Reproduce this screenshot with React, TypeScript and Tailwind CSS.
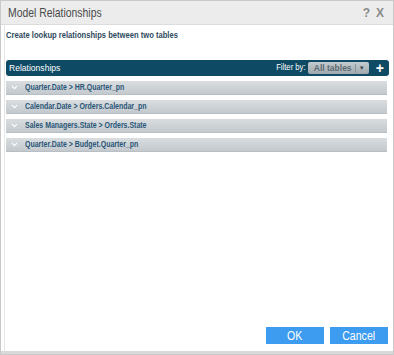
import { ChevronDown } from 'lucide-react'

const relationships = [
    'Quarter.Date > HR.Quarter_pn',
    'Calendar.Date > Orders.Calendar_pn',
    'Sales Managers.State > Orders.State',
    'Quarter.Date > Budget.Quarter_pn',
]

export default function App() {
    return (
        <div
            className="w-[394px] h-[355px] bg-white border border-[#c9c9c9] flex flex-col overflow-hidden"
            style={{ fontFamily: '"Liberation Sans", Arial, sans-serif' }}
        >
            {/* Title bar */}
            <div className="h-[24px] shrink-0 bg-[#ececec] border-b border-[#dcdcdc] flex items-center justify-between pl-[7px] pr-[9px]">
                <span className="inline-block origin-left scale-x-[0.8] text-[13px] text-[#4a4a4a] whitespace-nowrap">Model Relationships</span>
                <div className="flex items-center gap-[6px] text-[12px] font-bold text-[#8a8a8a]">
                    <span>?</span>
                    <span>X</span>
                </div>
            </div>

            {/* Body */}
            <div className="flex-1 flex flex-col pl-[1px] pr-[4px] border-l border-[#e6e6e6] ml-[3px]">
                <p className="mt-[3px] leading-[14px] text-[9.5px] font-bold text-[#2e4a5e] whitespace-nowrap">
                    <span className="inline-block origin-left scale-x-[0.8]">Create lookup relationships between two tables</span>
                </p>

                <div className="mt-[18px] h-[16px] bg-[#0e4a64] rounded-[3px] flex items-center justify-between pl-[3px] pr-[5px]">
                    <span className="inline-block origin-left scale-x-[0.9] text-[9.5px] text-white whitespace-nowrap">Relationships</span>
                    <div className="flex items-center">
                        <span className="inline-block origin-right scale-x-[0.85] text-[9px] text-white mr-[2px] whitespace-nowrap">Filter by:</span>
                        <div className="h-[12px] w-[61px] rounded-[2px] bg-gradient-to-b from-[#c5ccd0] to-[#9ea8ae] flex items-center justify-between pl-[6px] pr-[2px]">
                            <span className="text-[8.5px] font-bold text-[#5f6b72] whitespace-nowrap">All tables</span>
                            <span className="flex items-center border-l border-[#8a959b] pl-[3px] pr-[2px] text-[6px] text-[#3c464c]">▼</span>
                        </div>
                        <span className="ml-[7px] text-[14px] font-bold text-white leading-none">+</span>
                    </div>
                </div>

                <div className="mt-[5px] flex flex-col gap-[5px] pr-[2px]">
                    {relationships.map((r) => (
                        <div
                            key={r}
                            className="h-[14px] bg-gradient-to-b from-[#d9dde0] to-[#c3c9cd] border-b border-[#b8bfc4] flex items-center pl-[4px]"
                        >
                            <ChevronDown size={9} strokeWidth={3} className="text-white shrink-0" />
                            <span className="ml-[6px] inline-block origin-left scale-x-[0.82] text-[8.5px] font-bold text-[#2a5677] whitespace-nowrap">{r}</span>
                        </div>
                    ))}
                </div>

                <div className="flex-1" />

                <div className="flex justify-end gap-[6px] pr-[1px] mb-[7px]">
                    <button className="w-[58px] h-[17px] bg-[#3d9cf0] text-white text-[12px] leading-none">
                        <span className="inline-block scale-x-[0.88]">OK</span>
                    </button>
                    <button className="w-[58px] h-[17px] bg-[#3d9cf0] text-white text-[12px] leading-none">
                        <span className="inline-block scale-x-[0.88]">Cancel</span>
                    </button>
                </div>
            </div>
            <div className="h-[3px] shrink-0 bg-[#d9d9d9]" />
        </div>
    )
}
